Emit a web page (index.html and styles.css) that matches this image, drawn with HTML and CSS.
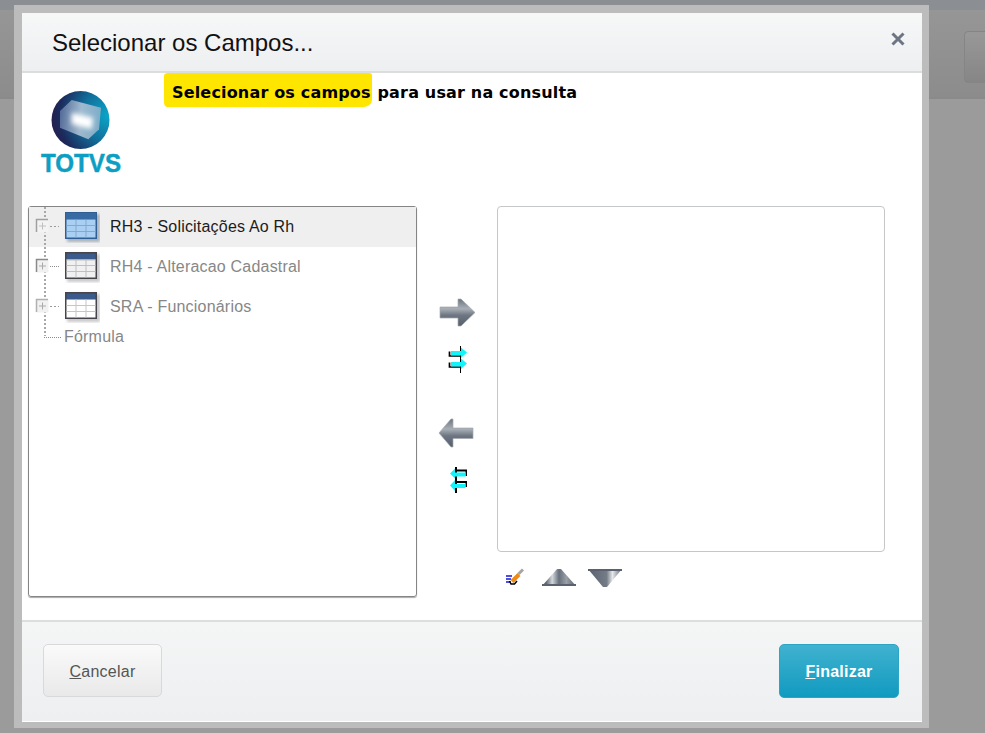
FILE: index.html
```html
<!DOCTYPE html>
<html lang="pt">
<head>
<meta charset="utf-8">
<title>Selecionar os Campos</title>
<link rel="stylesheet" href="styles.css">
</head>
<body>
<div class="backdrop">
  <div class="strip"></div>
  <div class="page-header"><div class="page-btn"></div></div>
</div>

<svg class="defs" width="0" height="0" aria-hidden="true">
  <defs>
    <linearGradient id="arrowH" x1="0" y1="0" x2="0" y2="1">
      <stop offset="0" stop-color="#6b7480"/>
      <stop offset=".36" stop-color="#a9afb6"/>
      <stop offset=".6" stop-color="#6d7682"/>
      <stop offset="1" stop-color="#565f6b"/>
    </linearGradient>
    <linearGradient id="triUp" x1="0" y1="0" x2="1" y2="0">
      <stop offset=".12" stop-color="#5d6671"/>
      <stop offset=".3" stop-color="#d5d8dc"/>
      <stop offset=".5" stop-color="#66707c"/>
      <stop offset=".72" stop-color="#9aa0a8"/>
      <stop offset="1" stop-color="#59626e"/>
    </linearGradient>
    <linearGradient id="triDown" x1="0" y1="0" x2="1" y2="0">
      <stop offset="0" stop-color="#59626e"/>
      <stop offset=".55" stop-color="#747c87"/>
      <stop offset=".72" stop-color="#e6e8ea"/>
      <stop offset="1" stop-color="#5d6671"/>
    </linearGradient>
    <radialGradient id="globe" cx=".98" cy=".42" r="1">
      <stop offset="0" stop-color="#0ba6c8"/>
      <stop offset=".45" stop-color="#11709c"/>
      <stop offset=".85" stop-color="#1c2a5c"/>
      <stop offset="1" stop-color="#241f4d"/>
    </radialGradient>
    <linearGradient id="quad" x1="0" y1=".4" x2="1" y2=".5">
      <stop offset="0" stop-color="#5f78a4"/>
      <stop offset=".5" stop-color="#b9c9da"/>
      <stop offset="1" stop-color="#8fb2cc"/>
    </linearGradient>
    <filter id="soft" x="-30%" y="-30%" width="160%" height="160%"><feGaussianBlur stdDeviation="1.500"/></filter>
    <filter id="edge" x="-10%" y="-10%" width="120%" height="120%"><feGaussianBlur stdDeviation=".6"/></filter>
    <filter id="glowBlur" x="-40%" y="-40%" width="180%" height="180%"><feGaussianBlur stdDeviation="2.500"/></filter>
  </defs>
</svg>

<div class="modal">
  <header class="modal-head">
    <h1 class="modal-title">Selecionar os Campos...</h1>
    <svg class="close" width="14" height="14" viewBox="0 0 14 14"><path d="M1.500 1.500 12.500 12.500M12.500 1.500 1.500 12.500" stroke="#6d7585" stroke-width="3"/></svg>
  </header>

  <div class="modal-body">
    <div class="intro">
      <svg class="logo" width="88" height="84" viewBox="0 0 88 84">
        <circle cx="40.500" cy="30" r="29" fill="url(#globe)"/>
        <path d="M20 21 31.700 10 61 17.700 59 39.300 48.300 49.300 20 37.700Z" fill="url(#quad)" opacity=".85" filter="url(#edge)"/>
        <path d="M31.700 22.700 53 27.700 51.700 39 31.700 34Z" fill="#fff" filter="url(#glowBlur)"/>
        <text class="logo-text" x="1" y="82" textLength="80" lengthAdjust="spacingAndGlyphs">TOTVS</text>
      </svg>
      <p class="intro-text"><span class="mark">Selecionar os campos</span> para usar na consulta</p>
    </div>

    <div class="picker">
      <div class="tree">
        <div class="row row-active">
          <svg class="conn" width="35" height="40" viewBox="0 0 35 40">
            <path class="dots" d="M16 0V40"/>
            <path class="dash" d="M21 19.500H30"/>
            <rect x="7.500" y="12.500" width="12" height="13" fill="#f3f3f3"/>
            <path d="M7.500 25V12.500H19" fill="none" stroke="#a0a0a0" stroke-width="1.500"/>
            <path d="M10 19H17M13.500 15.500V22.500" stroke="#c0c0c0"/>
          </svg>
          <svg class="tbl" width="36" height="32" viewBox="0 0 36 32">
            <rect x="3" y="3" width="33" height="28" fill="#55687e" opacity=".45" filter="url(#soft)"/>
            <rect x="1" y="1" width="32" height="27" fill="#2f5f95"/>
            <rect x="2" y="2" width="30" height="6" fill="#386aa3"/>
            <rect x="2.500" y="8.500" width="29" height="18" fill="#a9cff2"/>
            <path d="M2.500 14.500H31.500M2.500 20.500H31.500M12 8.500V26.500M22 8.500V26.500" stroke="#86a9cb"/>
          </svg>
          <span class="label">RH3 - Solicitações Ao Rh</span>
        </div>
        <div class="row">
          <svg class="conn" width="35" height="40" viewBox="0 0 35 40">
            <path class="dots" d="M16 0V40"/>
            <path class="dots-thin" d="M21 19.500H30"/>
            <rect x="7.500" y="12.500" width="12" height="13" fill="#f1f1f1"/>
            <path d="M7.500 25V12.500H19" fill="none" stroke="#8a8a8a" stroke-width="1.500"/>
            <path d="M10 19H17M13.500 15.500V22.500" stroke="#aaa"/>
          </svg>
          <svg class="tbl" width="36" height="32" viewBox="0 0 36 32">
            <rect x="3" y="3" width="33" height="28" fill="#666" opacity=".35" filter="url(#soft)"/>
            <rect x="1" y="1" width="32" height="27" fill="#45454b"/>
            <rect x="2.500" y="2.500" width="29" height="6" fill="#3b5b8c"/>
            <rect x="2.500" y="8.500" width="29" height="18" fill="#f1f1f1"/>
            <path d="M2.500 9H31.500M2.500 14.500H31.500M2.500 20.500H31.500M12 8.500V26.500M22 8.500V26.500" stroke="#bfbfbf"/>
          </svg>
          <span class="label">RH4 - Alteracao Cadastral</span>
        </div>
        <div class="row">
          <svg class="conn" width="35" height="40" viewBox="0 0 35 40">
            <path class="dots" d="M16 0V40"/>
            <path class="dash" d="M21 19.500H30"/>
            <rect x="7.500" y="12.500" width="12" height="13" fill="#f1f1f1"/>
            <path d="M7.500 25V12.500H19" fill="none" stroke="#b0b0b0" stroke-width="1.500"/>
            <path d="M10 19H17M13.500 15.500V22.500" stroke="#aaa"/>
          </svg>
          <svg class="tbl" width="36" height="32" viewBox="0 0 36 32">
            <rect x="3" y="3" width="33" height="28" fill="#666" opacity=".35" filter="url(#soft)"/>
            <rect x="1" y="1" width="32" height="27" fill="#45454b"/>
            <rect x="2.500" y="2.500" width="29" height="6" fill="#3b5b8c"/>
            <rect x="2.500" y="8.500" width="29" height="18" fill="#fff"/>
            <path d="M2.500 14.500H31.500M2.500 20.500H31.500M12 8.500V26.500M22 8.500V26.500" stroke="#c6c6c6"/>
          </svg>
          <span class="label">SRA - Funcionários</span>
        </div>
        <div class="row row-leaf">
          <svg class="conn-leaf" width="35" height="20" viewBox="0 0 35 20">
            <path class="dots" d="M16 0V9"/>
            <path class="dots-thin" d="M15 10.500H33"/>
          </svg>
          <span class="label">Fórmula</span>
        </div>
      </div>

      <div class="transfer">
        <svg class="big" width="36" height="30" viewBox="0 0 36 30"><path d="M1 9H19V1H22L36 14.500 22 28H19V20H1Z" fill="url(#arrowH)" stroke="#a4a9af" stroke-width=".7"/></svg>
        <svg class="small s1" width="20" height="28" viewBox="0 0 20 28">
          <path d="M13.500 0V27" stroke="#000"/>
          <path d="M2.500 5.500V10H14M2.500 16.500V21H14" fill="none" stroke="#000" stroke-width="1.700"/>
          <path d="M4 5H14V1.500L20 6.500 14 12V9.500H4ZM4 16H14V12.500L20 17.500 14 23V20.500H4Z" fill="#12f4fa"/>
        </svg>
        <svg class="big b2" width="36" height="30" viewBox="0 0 36 30"><path d="M35 10H15V1H13L1 15 13 29H15V20.500H35Z" fill="url(#arrowH)" stroke="#a4a9af" stroke-width=".7"/></svg>
        <svg class="small s2" width="20" height="28" viewBox="0 0 20 28">
          <path d="M9 1V27" stroke="#000" stroke-width="2"/>
          <path d="M9 4.500H19.500V10M9 16H19.500V21" fill="none" stroke="#000" stroke-width="2"/>
          <path d="M18.500 6.500H8V2.500L3 7.500 8 12.500V10.500H18.500ZM18.500 18H8V14L3 19.500 8 25V22H18.500Z" fill="#12f4fa"/>
        </svg>
      </div>

      <div class="target">
        <div class="target-box"></div>
        <div class="tools">
          <svg class="brush" width="18" height="17" viewBox="0 0 18 17">
            <path d="M0 8H6M0 11H5M0 14H5" stroke="#1414d8" stroke-width="1.500"/>
            <path d="M6 13.500 13 6.500" stroke="#f08a12" stroke-width="4"/>
            <path d="M3.500 13 5 16H8.500L11 13" fill="none" stroke="#000" stroke-width="1.500"/>
            <path d="M12.500 6 17 1.500" stroke="#a5a5a5" stroke-width="3"/>
          </svg>
          <svg width="34" height="18" viewBox="0 0 34 18"><path d="M0 18 15 1H19L34 18Z" fill="url(#triUp)"/><path d="M0 17H34" stroke="#59626e" stroke-width="2"/></svg>
          <svg class="tri-down" width="34" height="18" viewBox="0 0 34 18"><path d="M0 0H34L19 18H15Z" fill="url(#triDown)"/><path d="M0 1H34" stroke="#59626e" stroke-width="2"/></svg>
        </div>
      </div>
    </div>
  </div>

  <footer class="modal-foot">
    <button class="btn btn-cancel" type="button"><u>C</u>ancelar</button>
    <button class="btn btn-ok" type="button"><u>F</u>inalizar</button>
  </footer>
</div>
</body>
</html>
```
FILE: styles.css
```css
* { box-sizing: border-box; }
html, body { height: 100%; }
body {
  margin: 0;
  background: #9b9b9b;
  font-family: "Liberation Sans", Arial, sans-serif;
  overflow: hidden;
}
.defs { position: absolute; }
.strip { height: 10px; background: #8b8e92; }
.page-header {
  height: 89px;
  background: linear-gradient(#959695, #8c8c8c);
  border-bottom: 2px solid #8a8a8a;
  display: flex;
  justify-content: flex-end;
  padding-top: 21px;
  overflow: hidden;
}
.page-btn {
  width: 60px;
  height: 52px;
  margin-right: -39px;
  border: 1px solid #858585;
  border-radius: 4px;
  background: linear-gradient(#989898, #868686);
}
.modal {
  position: absolute;
  left: 14px;
  top: 5px;
  width: 915px;
  height: 723px;
  border-style: solid;
  border-color: #bcbcbc;
  border-width: 8px 7px 6px 8px;
  background: #fff;
  display: flex;
  flex-direction: column;
}
.modal-head {
  height: 60px;
  flex: none;
  background: linear-gradient(#f6f7f7, #eeeff1);
  border-bottom: 2px solid #dcdddd;
  display: flex;
  justify-content: space-between;
  padding: 18px 17px 0 30px;
}
.modal-title {
  margin: 0;
  font-size: 24px;
  font-weight: 400;
  line-height: 24px;
  color: #111;
}
.close { margin-top: 1px; }
.modal-body { flex: 1; background: #fff; }
.intro {
  height: 133px;
  display: flex;
  padding-left: 18px;
}
.logo { margin-top: 17px; flex: none; }
.logo-text {
  font-family: "Liberation Sans", Arial, sans-serif;
  font-weight: 700;
  font-size: 25px;
  fill: #0d9fc3;
  stroke: #0d9fc3;
  stroke-width: .5px;
}
.intro-text {
  margin: 0 0 0 36px;
  height: 34px;
  font-family: "DejaVu Sans", Verdana, sans-serif;
  font-size: 16px;
  letter-spacing: .17px;
  font-weight: 700;
  line-height: 40px;
  color: #000;
  white-space: nowrap;
}
.mark {
  display: inline-block;
  height: 34px;
  padding: 0 1px 0 8px;
  background: #ffe600;
  border-radius: 4px 3px 9px 3px / 3px 2px 7px 5px;
}
.picker {
  display: flex;
  padding-left: 6px;
}
.tree {
  width: 389px;
  height: 391px;
  border: 1px solid #858585;
  border-radius: 3px;
  box-shadow: 0 1px 1px #aaa;
  flex: none;
}
.row {
  height: 40px;
  display: flex;
  align-items: center;
}
.row-active { background: #efefef; }
.row-active .label { color: #1c1c1c; }
.row-leaf { height: 20px; }
.conn { flex: none; }
.conn-leaf { flex: none; }
.dots { fill: none; stroke: #a8a8a8; stroke-width: 2px; stroke-dasharray: 2 2; }
.dots-thin { fill: none; stroke: #8c8c8c; stroke-dasharray: 1 1; }
.dash { fill: none; stroke: #9a9a9a; stroke-dasharray: 2 2; }
.tbl { flex: none; }
.label {
  margin-left: 10px;
  font-size: 16px;
  letter-spacing: .2px;
  color: #878787;
  white-space: nowrap;
}
.row-leaf .label { margin-left: 0; }
.transfer {
  width: 80px;
  flex: none;
  display: flex;
  flex-direction: column;
  align-items: center;
  padding-top: 92px;
}
.big { flex: none; }
.small { flex: none; margin-top: 18px; }
.b2 { margin-top: 44px; margin-right: 2px; }
.target { width: 388px; flex: none; }
.target-box {
  height: 346px;
  border: 1px solid #c4c6c8;
  border-radius: 4px;
}
.tools {
  display: flex;
  align-items: flex-start;
  gap: 18px;
  margin-top: 16px;
  padding-left: 9px;
}
.tri-down { margin-left: -6px; margin-top: 1px; }
.modal-foot {
  height: 102px;
  flex: none;
  background: linear-gradient(#f4f5f5, #eeeff1);
  border-top: 2px solid #dcdddd;
  border-bottom: 1px solid #fff;
  display: flex;
  justify-content: space-between;
  align-items: flex-start;
  padding: 22px 23px 0 21px;
}
.btn {
  font-family: "Liberation Sans", Arial, sans-serif;
  font-size: 16px;
  letter-spacing: .25px;
  border-radius: 5px;
  padding: 2px 0 0;
}
.btn-cancel {
  width: 119px;
  height: 53px;
  color: #555;
  border: 1px solid #d9d9d9;
  background: linear-gradient(#fafafa, #e9e9e9);
}
.btn-ok {
  width: 120px;
  height: 54px;
  color: #fff;
  font-weight: 700;
  border: 1px solid #2ea4c4;
  background: linear-gradient(#40b2cf, #119ac0);
}
```
